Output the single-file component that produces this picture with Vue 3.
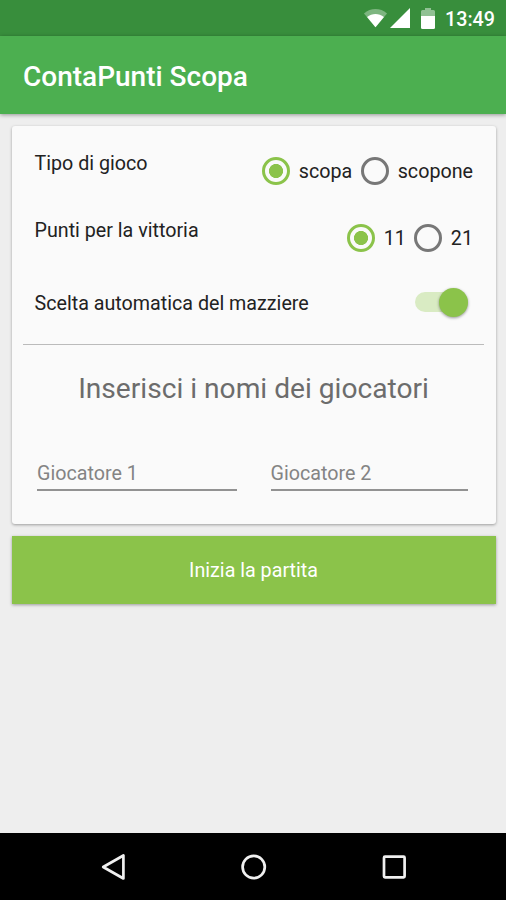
<script setup>
import { ref } from 'vue'

const gameType = ref('scopa')
const points = ref('11')
const autoDealer = ref(true)
const players = ref(['', ''])
const groups = [
  { label: 'Tipo di gioco', name: 'type', model: gameType, options: ['scopa', 'scopone'] },
  { label: 'Punti per la vittoria', name: 'points', model: points, options: ['11', '21'] },
]
</script>

<template>
  <div class="screen">
    <div class="status">
      <svg class="wifi" width="25" height="20" viewBox="0 0 26 20">
        <path d="M1 5.2C8 -.9 18 -.9 25 5.2L13 19.5Z" fill="#fff" opacity=".35" />
        <path d="M4.2 9C9.5 4.7 16.5 4.7 21.8 9L13 19.5Z" fill="#fff" />
      </svg>
      <svg class="signal" width="20" height="20" viewBox="0 0 20 20"><path d="M0 20L20 0V20Z" fill="#fff" /></svg>
      <svg class="battery" width="14" height="21" viewBox="0 0 14 21">
        <path d="M0 8V3.5Q0 2 1.5 2H4V0H10V2H12.5Q14 2 14 3.5V8Z" fill="#fff" opacity=".45" />
        <path d="M0 8H14V19.5Q14 21 12.5 21H1.5Q0 21 0 19.5Z" fill="#fff" />
      </svg>
      <span class="clock">13:49</span>
    </div>
    <header class="appbar"><h1>ContaPunti Scopa</h1></header>
    <main>
      <section class="card">
        <div v-for="g in groups" :key="g.name" class="row" :class="g.name">
          <span class="label">{{ g.label }}</span>
          <div class="radios">
            <label v-for="o in g.options" :key="o" class="radio">
              <input type="radio" :name="g.name" :value="o" :checked="g.model.value === o" @change="g.model.value = o" />
              <span class="option">{{ o }}</span>
            </label>
          </div>
        </div>
        <div class="row dealer">
          <span class="label">Scelta automatica del mazziere</span>
          <button class="switch" :class="{ on: autoDealer }" aria-label="Scelta automatica del mazziere" @click="autoDealer = !autoDealer"><i></i></button>
        </div>
        <h2>Inserisci i nomi dei giocatori</h2>
        <div class="fields">
          <input v-for="(p, i) in players" :key="i" v-model="players[i]" type="text" :placeholder="`Giocatore ${i + 1}`" />
        </div>
      </section>
      <button class="start">Inizia la partita</button>
    </main>
    <nav>
      <svg width="28" height="30" viewBox="0 0 28 30"><path d="M24.4 3.5V26.5L4.2 15Z" /></svg>
      <svg width="28" height="30" viewBox="0 0 28 30"><circle cx="13.7" cy="15" r="11.1" /></svg>
      <svg width="28" height="30" viewBox="0 0 28 30"><rect x="4" y="4.7" width="20.6" height="20.6" rx="1" /></svg>
    </nav>
  </div>
</template>

<style>
body { margin: 0; }
</style>

<style scoped>
* { box-sizing: border-box; }
.screen {
  width: 506px;
  height: 900px;
  display: flex;
  flex-direction: column;
  overflow: hidden;
  background: #eee;
  color: #222;
  font-family: Roboto, "Liberation Sans", sans-serif;
}
input, button { font-family: inherit; }
.status {
  height: 36px;
  flex: none;
  display: flex;
  align-items: flex-start;
  padding: 8px 10px 0 0;
  justify-content: flex-end;
  background: #388e3c;
}
.signal { margin-left: 2px; }
.battery { margin-left: 11px; }
.clock {
  width: 51px;
  margin-left: 10px;
  color: #fff;
  font-size: 19.7px;
  font-weight: 500;
  line-height: 23px;
  white-space: nowrap;
}
.appbar {
  height: 78px;
  flex: none;
  display: flex;
  align-items: center;
  padding: 4px 0 0 23px;
  background: #4caf50;
  box-shadow: 0 1px 4px rgba(0, 0, 0, .38);
}
h1 {
  margin: 0;
  color: #fff;
  font-size: 28px;
  line-height: 36px;
  font-weight: 500;
}
main { flex: 1; padding: 12px 10px 0 12px; }
.card {
  height: 398px;
  padding: 0 12px 0 11px;
  border-radius: 3px;
  background: #fafafa;
  box-shadow: 0 1px 3px rgba(0, 0, 0, .35);
}
.row {
  display: flex;
  justify-content: space-between;
  align-items: flex-start;
  padding: 0 11px 0 11.5px;
}
.label {
  padding-top: 26px;
  font-size: 19.7px;
  line-height: 24px;
}
.type { height: 67px; }
.points { height: 73px; }
.dealer { height: 79px; padding-right: 16px; border-bottom: 1px solid #bbb; }
.radios { display: flex; padding-top: 31px; }
.radio { display: flex; align-items: center; height: 28px; }
.radio + .radio { margin-left: 8.5px; }
.radio input {
  appearance: none;
  width: 28px;
  height: 28px;
  margin: 0;
  border: 3px solid #777;
  border-radius: 50%;
}
.radio input:checked {
  border-color: #8bc34a;
  background: radial-gradient(circle, #8bc34a 6.7px, transparent 7.4px);
}
.option { margin-left: 9px; padding-top: 2px; font-size: 19.7px; line-height: 24px; }
.points .option { margin-left: 8.5px; }
.switch {
  width: 53px;
  height: 20px;
  margin-top: 26px;
  padding: 0;
  display: flex;
  align-items: center;
  border: 0;
  border-radius: 10px;
  background: #c4c4c4;
}
.switch i {
  width: 29px;
  height: 29px;
  flex: none;
  border-radius: 50%;
  background: #f1f1f1;
  box-shadow: 0 1px 3px rgba(0, 0, 0, .4);
}
.switch.on { justify-content: flex-end; background: #d9ebc3; }
.switch.on i { background: #8bc34a; }
h2 {
  margin: 26px 0 0;
  color: #6c6c6c;
  text-align: center;
  font-size: 28.15px;
  line-height: 36px;
  font-weight: 400;
}
.fields {
  display: grid;
  grid-template-columns: 200px 197px;
  column-gap: 33.5px;
  padding: 49px 0 0 14px;
}
.fields input {
  width: 100%;
  height: 35px;
  padding: 1px 0 0;
  border: 0;
  border-bottom: 2px solid #929292;
  border-radius: 0;
  outline: 0;
  background: none;
  color: #222;
  font-size: 19.7px;
}
.fields input::placeholder { color: #848484; opacity: 1; }
.start {
  display: block;
  width: 484px;
  height: 68px;
  margin-top: 12px;
  padding: 1px 1px 0 0;
  border: 0;
  background: #8bc34a;
  color: #fff;
  font-size: 19.7px;
  box-shadow: 0 1px 3px rgba(0, 0, 0, .35);
}
nav {
  height: 67px;
  flex: none;
  display: flex;
  align-items: center;
  justify-content: space-between;
  padding: 0 98px 0 99px;
  background: #000;
}
nav svg { fill: none; stroke: #f0f0f0; stroke-width: 2.7; stroke-linejoin: round; }
</style>
